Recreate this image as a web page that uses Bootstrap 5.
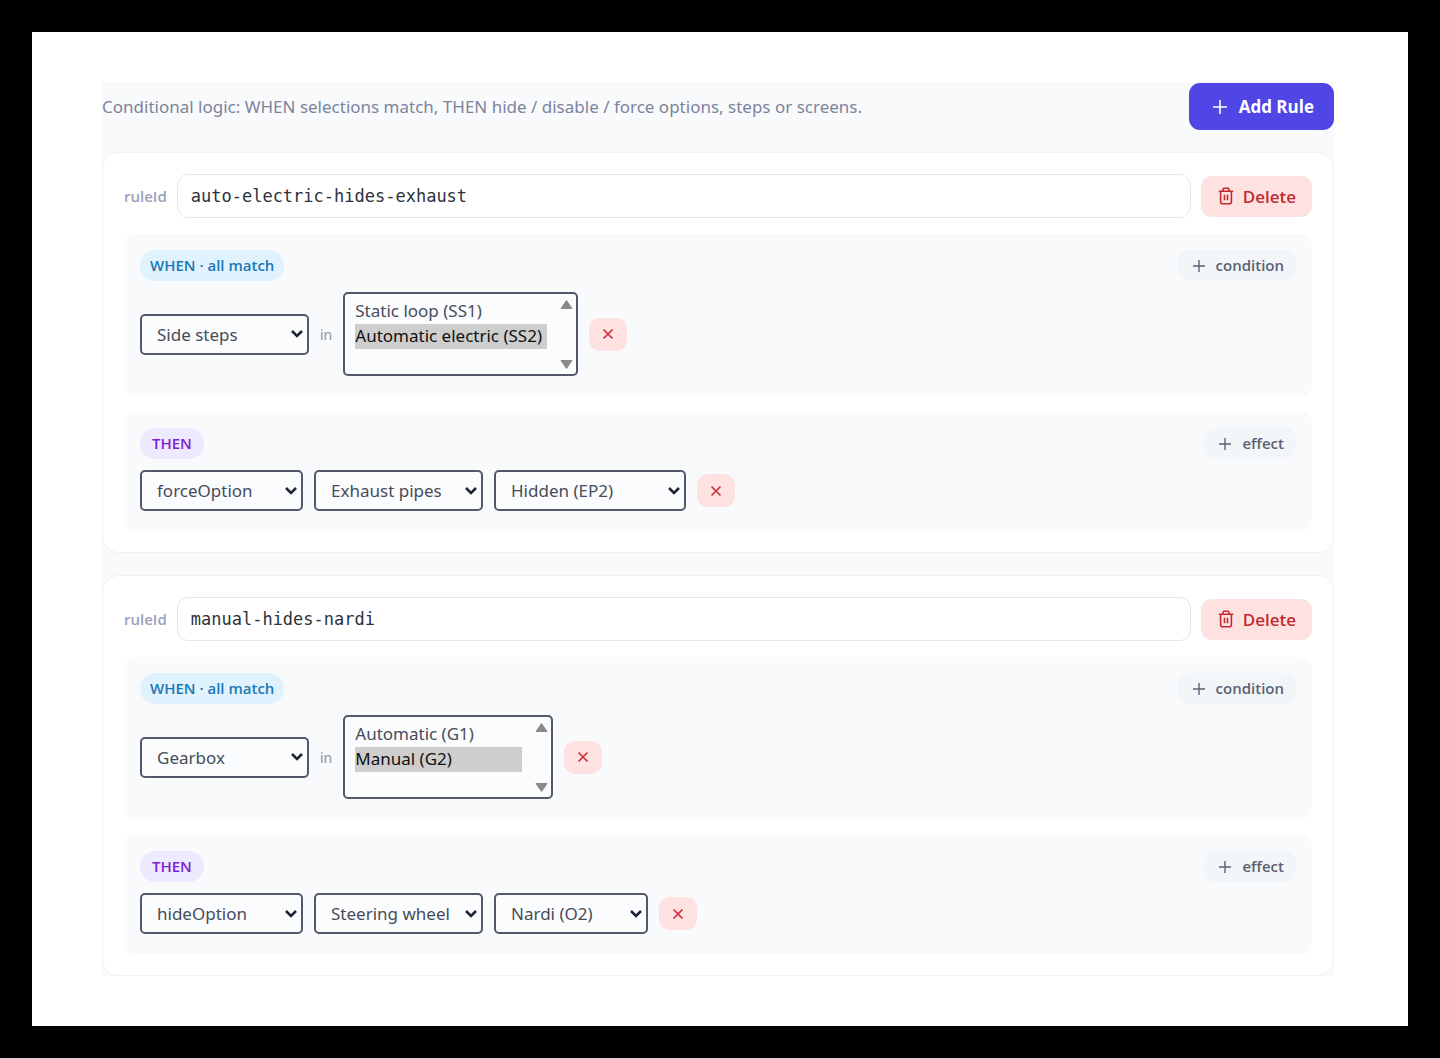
<!DOCTYPE html>
<html lang="en">
<head>
<meta charset="utf-8">
<meta name="viewport" content="width=device-width, initial-scale=1">
<title>Conditional rules</title>
<link href="https://cdn.jsdelivr.net/npm/bootstrap@5.3.0/dist/css/bootstrap.min.css" rel="stylesheet">
<style>
  body { background: #000; color: #3f4654; font-family: "Noto Sans", "Open Sans", sans-serif; font-size: 17px; line-height: 25px; padding: 32px; border-bottom: 1px solid #d8d6d8; }
  .sheet { background: #fff; padding: 50px 74px 50px 70px; }
  .rules { background: #f9fafc; gap: 22px; padding-top: 1px; }
  .intro { color: #7c849c; }
  .btn { display: inline-flex; align-items: center; justify-content: center; border: 0; font-family: "Open Sans", sans-serif; font-size: 17px; line-height: 25px; }
  .btn-add { --bs-btn-color: #fff; --bs-btn-bg: #4f46e5; --bs-btn-hover-color: #fff; --bs-btn-hover-bg: #4338ca; border-radius: 11px; font-weight: 700; padding: 11px 20px 11px 24px; gap: 12px; }
  .btn-del { --bs-btn-color: #c22a2e; --bs-btn-bg: #fee2e2; --bs-btn-hover-color: #b91c1c; --bs-btn-hover-bg: #fecaca; border-radius: 11px; font-weight: 600; padding: 8px 16px 8px 17px; gap: 9px; }
  .btn-drop { --bs-btn-color: #d0303a; --bs-btn-bg: #fee2e2; --bs-btn-hover-color: #b91c1c; --bs-btn-hover-bg: #fecaca; border-radius: 11px; width: 38px; height: 33px; padding: 0; }
  .btn-more { --bs-btn-color: #596273; --bs-btn-bg: #f3f6f9; --bs-btn-hover-color: #334155; --bs-btn-hover-bg: #e2e8f0; border-radius: 11px; font-size: 15px; font-weight: 600; padding: 3px 12px 3px 15px; gap: 11px; }
  .rule { --bs-card-border-color: #eff1f4; --bs-card-border-radius: 16px; --bs-card-inner-border-radius: 15px; --bs-card-bg: #fff; padding: 21px; gap: 16px; }
  .rule-head { gap: 10px; }
  .key, .tag { font-family: "Open Sans", sans-serif; }
  .key { color: #98a2bb; font-size: 15px; font-weight: 600; }
  .rule-id { border-color: #e5e7eb; border-radius: 11px; color: #2c323e; font-family: "DejaVu Sans Mono", "Liberation Mono", monospace; font-size: 17px; line-height: 24px; padding: 9px 13px; }
  .clause { background: #f9fafc; border-radius: 11px; padding: 16px 16px 20px; gap: 11px; }
  .tag { border-radius: 16px; font-size: 15px; font-weight: 600; padding: 3px 12px; }
  .tag-when { background: #e0f2fe; color: #1b78b4; padding: 3px 10px; }
  .tag-then { background: #ede9fe; color: #7a22d6; }
  .parts { gap: 11px; }
  .joiner { color: #8b909a; font-size: 14px; }
  .pick { appearance: none; background-color: #fbfcfe; border: 2px solid #55586d; border-radius: 5px; color: #464c59; font-size: 17px; line-height: 25px; }
  select.pick { width: auto; padding: 6px 24px 6px 15px; background-position: right 4px center; background-size: 12px 10px;
    background-image: url("data:image/svg+xml,%3Csvg xmlns='http://www.w3.org/2000/svg' viewBox='0 0 12 10'%3E%3Cpath d='M1 2l5 5 5-5' fill='none' stroke='%23202437' stroke-width='2.6'/%3E%3C/svg%3E"); }
  select.w-effect { width: 163px; }
  select.w-step { width: 169px; }
  select.w-choice-a { width: 192px; }
  select.w-choice-b { width: 154px; }
  .listing { height: 84px; padding: 5px 3px 4px 10px; }
  .listing select { appearance: none; background: transparent; border: 0; outline: 0; color: inherit; overflow: hidden; height: 71px; padding: 0; font: inherit; }
  .listing option { padding: 0; min-height: 25px; line-height: 25px; }
  .list-a { width: 192px; }
  .list-b { width: 167px; }
  .bar { width: 13px; margin-left: 13px; }
</style>
<script src="https://cdn.jsdelivr.net/npm/bootstrap@5.3.0/dist/js/bootstrap.bundle.min.js"></script>
</head>
<body>
<svg class="d-none" xmlns="http://www.w3.org/2000/svg">
  <symbol id="plus" viewBox="0 0 14 14"><path d="M7 0v14M0 7h14" fill="none" stroke="currentColor" stroke-width="1.6"/></symbol>
  <symbol id="cross" viewBox="0 0 12 12"><path d="M1.500 1.500l9 9M10.500 1.500l-9 9" fill="none" stroke="currentColor" stroke-width="1.700"/></symbol>
  <symbol id="trash" viewBox="0 0 16 18"><path d="M0.800 4.200h14.400M4.500 4.200L5.600 1.300h4.800l1.100 2.900M2.600 4.200v10.600q0 2 2 2h6.800q2 0 2-2V4.200M6.500 7.800v5.400M9.500 7.800v5.400" fill="none" stroke="currentColor" stroke-width="1.600" stroke-linejoin="round"/></symbol>
  <symbol id="up" viewBox="0 0 13 11"><path d="M6.500 1.500L12 9.500H1z" fill="#8a8a8a" stroke="#8a8a8a" stroke-linejoin="round"/></symbol>
  <symbol id="down" viewBox="0 0 13 11"><path d="M6.500 9.500L12 1.500H1z" fill="#8a8a8a" stroke="#8a8a8a" stroke-linejoin="round"/></symbol>
</svg>
<main class="sheet">
  <div class="rules d-flex flex-column">
    <header class="d-flex align-items-center justify-content-between">
      <p class="intro mb-0">Conditional logic: WHEN selections match, THEN hide / disable / force options, steps or screens.</p>
      <button type="button" class="btn btn-add"><svg width="14" height="14" aria-hidden="true"><use href="#plus"/></svg>Add Rule</button>
    </header>

    <section class="card rule">
      <div class="rule-head d-flex align-items-center">
        <label class="key" for="rule1">ruleId</label>
        <input id="rule1" class="form-control rule-id" type="text" value="auto-electric-hides-exhaust">
        <button type="button" class="btn btn-del"><svg width="16" height="18" aria-hidden="true"><use href="#trash"/></svg>Delete</button>
      </div>
      <div class="clause d-flex flex-column">
        <div class="d-flex align-items-center justify-content-between">
          <span class="tag tag-when">WHEN · all match</span>
          <button type="button" class="btn btn-more"><svg width="12" height="12" aria-hidden="true"><use href="#plus"/></svg>condition</button>
        </div>
        <div class="parts d-flex align-items-center">
          <select class="form-select pick w-step" aria-label="Step"><option>Side steps</option></select>
          <span class="joiner">in</span>
          <div class="pick listing d-flex">
            <select class="list-a" multiple size="3" aria-label="Matching options"><option>Static loop (SS1)</option><option selected>Automatic electric (SS2)</option></select>
            <div class="bar d-flex flex-column justify-content-between" aria-hidden="true"><svg width="13" height="11"><use href="#up"/></svg><svg width="13" height="11"><use href="#down"/></svg></div>
          </div>
          <button type="button" class="btn btn-drop" aria-label="Remove condition"><svg width="12" height="12" aria-hidden="true"><use href="#cross"/></svg></button>
        </div>
      </div>
      <div class="clause d-flex flex-column">
        <div class="d-flex align-items-center justify-content-between">
          <span class="tag tag-then">THEN</span>
          <button type="button" class="btn btn-more"><svg width="12" height="12" aria-hidden="true"><use href="#plus"/></svg>effect</button>
        </div>
        <div class="parts d-flex align-items-center">
          <select class="form-select pick w-effect" aria-label="Effect"><option>forceOption</option></select>
          <select class="form-select pick w-step" aria-label="Target step"><option>Exhaust pipes</option></select>
          <select class="form-select pick w-choice-a" aria-label="Target option"><option>Hidden (EP2)</option></select>
          <button type="button" class="btn btn-drop" aria-label="Remove effect"><svg width="12" height="12" aria-hidden="true"><use href="#cross"/></svg></button>
        </div>
      </div>
    </section>

    <section class="card rule">
      <div class="rule-head d-flex align-items-center">
        <label class="key" for="rule2">ruleId</label>
        <input id="rule2" class="form-control rule-id" type="text" value="manual-hides-nardi">
        <button type="button" class="btn btn-del"><svg width="16" height="18" aria-hidden="true"><use href="#trash"/></svg>Delete</button>
      </div>
      <div class="clause d-flex flex-column">
        <div class="d-flex align-items-center justify-content-between">
          <span class="tag tag-when">WHEN · all match</span>
          <button type="button" class="btn btn-more"><svg width="12" height="12" aria-hidden="true"><use href="#plus"/></svg>condition</button>
        </div>
        <div class="parts d-flex align-items-center">
          <select class="form-select pick w-step" aria-label="Step"><option>Gearbox</option></select>
          <span class="joiner">in</span>
          <div class="pick listing d-flex">
            <select class="list-b" multiple size="3" aria-label="Matching options"><option>Automatic (G1)</option><option selected>Manual (G2)</option></select>
            <div class="bar d-flex flex-column justify-content-between" aria-hidden="true"><svg width="13" height="11"><use href="#up"/></svg><svg width="13" height="11"><use href="#down"/></svg></div>
          </div>
          <button type="button" class="btn btn-drop" aria-label="Remove condition"><svg width="12" height="12" aria-hidden="true"><use href="#cross"/></svg></button>
        </div>
      </div>
      <div class="clause d-flex flex-column">
        <div class="d-flex align-items-center justify-content-between">
          <span class="tag tag-then">THEN</span>
          <button type="button" class="btn btn-more"><svg width="12" height="12" aria-hidden="true"><use href="#plus"/></svg>effect</button>
        </div>
        <div class="parts d-flex align-items-center">
          <select class="form-select pick w-effect" aria-label="Effect"><option>hideOption</option></select>
          <select class="form-select pick w-step" aria-label="Target step"><option>Steering wheel</option></select>
          <select class="form-select pick w-choice-b" aria-label="Target option"><option>Nardi (O2)</option></select>
          <button type="button" class="btn btn-drop" aria-label="Remove effect"><svg width="12" height="12" aria-hidden="true"><use href="#cross"/></svg></button>
        </div>
      </div>
    </section>
  </div>
</main>
</body>
</html>
